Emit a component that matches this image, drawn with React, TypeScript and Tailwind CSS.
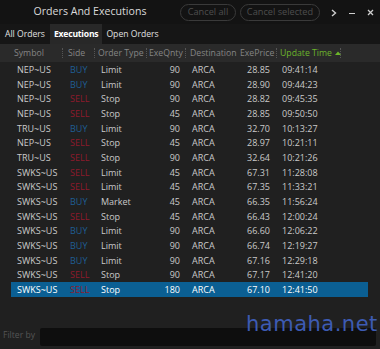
import React from "react";

type Row = { sym: string; side: "BUY" | "SELL"; type: string; qty: number; price: string; time: string };

const rows: Row[] = [
  { sym: "NEP~US", side: "BUY", type: "Limit", qty: 90, price: "28.85", time: "09:41:14" },
  { sym: "NEP~US", side: "BUY", type: "Limit", qty: 90, price: "28.90", time: "09:44:23" },
  { sym: "NEP~US", side: "SELL", type: "Stop", qty: 90, price: "28.82", time: "09:45:35" },
  { sym: "NEP~US", side: "SELL", type: "Stop", qty: 45, price: "28.85", time: "09:50:50" },
  { sym: "TRU~US", side: "BUY", type: "Limit", qty: 90, price: "32.70", time: "10:13:27" },
  { sym: "NEP~US", side: "SELL", type: "Stop", qty: 45, price: "28.97", time: "10:21:11" },
  { sym: "TRU~US", side: "SELL", type: "Stop", qty: 90, price: "32.64", time: "10:21:26" },
  { sym: "SWKS~US", side: "SELL", type: "Limit", qty: 45, price: "67.31", time: "11:28:08" },
  { sym: "SWKS~US", side: "SELL", type: "Limit", qty: 45, price: "67.35", time: "11:33:21" },
  { sym: "SWKS~US", side: "BUY", type: "Market", qty: 45, price: "66.35", time: "11:56:24" },
  { sym: "SWKS~US", side: "SELL", type: "Stop", qty: 45, price: "66.43", time: "12:00:24" },
  { sym: "SWKS~US", side: "BUY", type: "Limit", qty: 90, price: "66.60", time: "12:06:22" },
  { sym: "SWKS~US", side: "BUY", type: "Limit", qty: 90, price: "66.74", time: "12:19:27" },
  { sym: "SWKS~US", side: "BUY", type: "Limit", qty: 90, price: "67.16", time: "12:29:18" },
  { sym: "SWKS~US", side: "SELL", type: "Stop", qty: 90, price: "67.17", time: "12:41:20" },
  { sym: "SWKS~US", side: "SELL", type: "Stop", qty: 180, price: "67.10", time: "12:41:50" },
];

function Sep() {
  return <span className="absolute right-0 top-[4px] h-[10px] border-r border-dotted border-[#555]" />;
}

export default function App() {
  return (
    <div
      className="relative w-[380px] h-[349px] overflow-hidden bg-[#202020] text-[#cacaca] whitespace-nowrap"
      style={{ fontFamily: '"Open Sans", "Noto Sans", sans-serif' }}
    >
      {/* Title bar */}
      <div className="flex items-center h-[24px] bg-[#131313]">
        <div className="w-[180px] text-center text-[10.6px] text-[#dadada] leading-none pb-[2px]">Orders And Executions</div>
        <div className="flex items-center gap-[4px]">
          <div className="w-[56px] h-[17px] rounded-full border border-[#3a3a3a] flex items-center justify-center text-[9.2px] text-[#4e4e4e] leading-none">
            Cancel all
          </div>
          <div className="w-[80px] h-[17px] rounded-full border border-[#3a3a3a] flex items-center justify-center text-[9.2px] text-[#4e4e4e] leading-none">
            Cancel selected
          </div>
        </div>
        <div className="flex items-center ml-[11px] text-[#cfcfcf]">
          <svg width="6" height="8" viewBox="0 0 6 8" className="mt-[1px]">
            <path d="M1 1 L4.5 4 L1 7" stroke="#cfcfcf" strokeWidth="1.4" fill="none" />
          </svg>
          <div className="ml-[12px] w-[6px] h-[1.5px] bg-[#cfcfcf] mt-[3px]" />
          <svg width="7" height="7" viewBox="0 0 7 7" className="ml-[12px]">
            <path d="M1 1 L6 6 M6 1 L1 6" stroke="#cfcfcf" strokeWidth="1.3" />
          </svg>
        </div>
      </div>

      {/* Tabs */}
      <div className="flex h-[20px] bg-[#161616] text-[8.6px] text-[#e0e0e0] leading-none">
        <div className="px-[5px] flex items-center">All Orders</div>
        <div className="px-[4px] flex items-center bg-[#282828] font-bold text-white tracking-[-0.2px]">Executions</div>
        <div className="px-[4px] flex items-center">Open Orders</div>
      </div>

      {/* Header */}
      <div className="flex h-[18px] bg-[#2a2a2a] text-[8.7px] text-[#858585] leading-[18px]">
        <div className="w-[11px]" />
        <div className="relative w-[52px] pl-[3px]">Symbol<Sep /></div>
        <div className="relative w-[32px] pl-[5px]">Side<Sep /></div>
        <div className="relative w-[52px] pl-[3px]">Order Type<Sep /></div>
        <div className="relative w-[39px] pl-[2px]">ExeQnty<Sep /></div>
        <div className="relative w-[51px] pl-[4px]">Destination</div>
        <div className="relative w-[40px] pl-[3px]">ExePrice<Sep /></div>
        <div className="relative w-[64px] pl-[3px] text-[#6cb52a] flex items-center">
          Update Time
          <svg width="6" height="4" viewBox="0 0 6 4" className="ml-[3px]">
            <path d="M0 4 L3 0.5 L6 4 Z" fill="#6cb52a" />
          </svg>
          <Sep />
        </div>
      </div>

      {/* Rows */}
      <div className="flex flex-col h-[260px] pl-[11px] pr-[12px] text-[9px]">
        {rows.map((r, i) => {
          const sel = i === rows.length - 1;
          return (
            <div
              key={i}
              className={`flex items-center h-[14.7px] leading-none ${sel ? "bg-[#0b5f93] text-white" : ""}`}
            >
              <div className="w-[52px] pl-[6px]">{r.sym}</div>
              <div className={`w-[32px] pl-[7px] ${r.side === "BUY" ? "text-[#1f5e93]" : "text-[#8e1a2c]"}`}>{r.side}</div>
              <div className="w-[52px] pl-[6px]">{r.type}</div>
              <div className="w-[39px] pr-[6px] text-right">{r.qty}</div>
              <div className="w-[51px] pl-[6px]">ARCA</div>
              <div className="w-[40px] pr-[7px] text-right">{r.price}</div>
              <div className="w-[64px] pl-[5px]">{r.time}</div>
            </div>
          );
        })}
      </div>

      {/* Filter bar */}
      <div className="flex items-center h-[27px] pl-[3px] pr-[4px]">
        <div className="w-[37px] text-[8.6px] text-[#555] leading-none">Filter by</div>
        <div className="flex-1 h-[18px] mt-[2px] rounded-[2px] bg-[#0e0e0e]" />
      </div>

      {/* Watermark */}
      <div
        className="absolute left-[246px] top-[314px] text-[21px] leading-none text-[#3d5bb3] tracking-[0.5px]"
        style={{ fontFamily: '"DejaVu Sans", sans-serif' }}
      >
        hamaha.net
      </div>
    </div>
  );
}
